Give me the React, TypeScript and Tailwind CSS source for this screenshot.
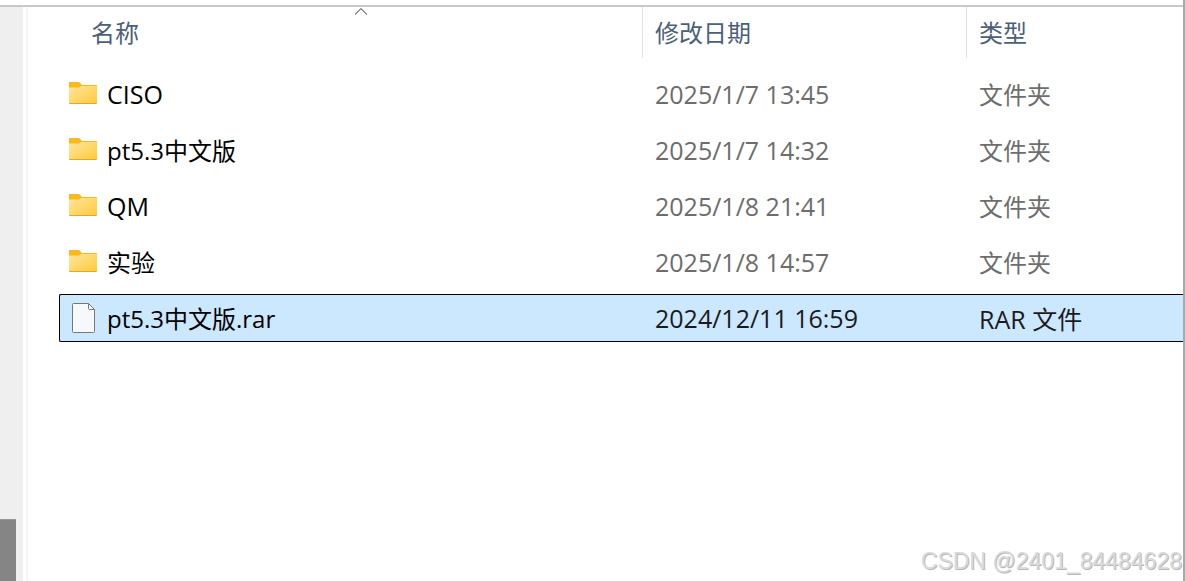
import React from "react";

type Entry = {
  name: string;
  modified: string;
  type: string;
  kind: "folder" | "file";
  selected?: boolean;
};

const entries: Entry[] = [
  { name: "CISO", modified: "2025/1/7 13:45", type: "文件夹", kind: "folder" },
  { name: "pt5.3中文版", modified: "2025/1/7 14:32", type: "文件夹", kind: "folder" },
  { name: "QM", modified: "2025/1/8 21:41", type: "文件夹", kind: "folder" },
  { name: "实验", modified: "2025/1/8 14:57", type: "文件夹", kind: "folder" },
  { name: "pt5.3中文版.rar", modified: "2024/12/11 16:59", type: "RAR 文件", kind: "file", selected: true },
];

function FolderIcon() {
  return (
    <svg width="28" height="22" viewBox="0 0 28 22" aria-hidden="true" className="shrink-0">
      <defs>
        <linearGradient id="folder-front" x1="0" y1="0" x2="1" y2="1">
          <stop offset="0" stopColor="#ffe79d" />
          <stop offset="1" stopColor="#ffc937" />
        </linearGradient>
      </defs>
      <path d="M0 1.2Q0 0 1.2 0H9.2Q10 0 10.6.6L13 3H27Q28 3 28 4V8H0Z" fill="#fbb81c" />
      <path d="M0 5.6H9.4Q10.2 5.6 10.8 5L12 4H27.2Q28 4 28 4.8V21Q28 22 27 22H1Q0 22 0 21Z" fill="url(#folder-front)" />
      <path d="M0 20.6Q0 22 1.2 22H26.8Q28 22 28 20.6Q27.6 21 26.8 21H1.2Q.4 21 0 20.6Z" fill="#eba51c" />
    </svg>
  );
}

function FileIcon() {
  return (
    <svg width="24" height="32" viewBox="0 0 24 32" aria-hidden="true" className="shrink-0">
      <path
        d="M1.5 1.5H16.5L22.5 7.5V29.5Q22.5 30.5 21.5 30.5H1.5Q.5 30.5.5 29.5V2.5Q.5 1.5 1.5 1.5Z"
        fill="#f6f8f9"
        stroke="#777777"
      />
      <path d="M16.5 1.5V6.5Q16.5 7.5 17.5 7.5H22.5" fill="none" stroke="#777777" />
    </svg>
  );
}

function SortCaret() {
  return (
    <svg
      width="13"
      height="7"
      viewBox="0 0 13 7"
      aria-hidden="true"
      className="absolute top-px left-1/2 -translate-x-1/2"
    >
      <path d="M.4 6.6 6.5.6 12.6 6.6" fill="none" stroke="#333333" />
    </svg>
  );
}

function HeaderButton({ label, sorted = false }: { label: string; sorted?: boolean }) {
  return (
    <button type="button" className="relative flex h-[51px] w-full items-center pt-px pl-3 text-2xl leading-8 text-[#4c607a]">
      {sorted && <SortCaret />}
      {label}
    </button>
  );
}

function Row({ entry }: { entry: Entry }) {
  const edge = entry.selected ? "border-black bg-[#cce8ff]" : "border-transparent";
  const detail = entry.selected ? "text-[#1b1b1b]" : "text-[#6d6d6d]";
  const latinName = /^[\x20-\x7e]+$/.test(entry.name);
  const typeSize = entry.kind === "file" ? "text-[25px]" : "text-2xl";
  return (
    <tr aria-selected={entry.selected ?? false}>
      <td className={`h-12 rounded-l-xs border-y border-l p-0 text-black ${edge}`}>
        <div className="flex items-center">
          <span className="flex w-[47px] items-center pl-[9px]">
            {entry.kind === "folder" ? (
              <span className="flex pb-0.5">
                <FolderIcon />
              </span>
            ) : (
              <span className="flex w-[30px] justify-center">
                <FileIcon />
              </span>
            )}
          </span>
          <span className={latinName ? "text-[25px] leading-8" : "pt-0.5 text-2xl leading-8"}>{entry.name}</span>
        </div>
      </td>
      <td className={`border-y p-0 pl-[13px] text-[25px] leading-8 ${edge} ${detail}`}>{entry.modified}</td>
      <td className={`border-y p-0 pt-0.5 pl-[13px] leading-8 ${typeSize} ${edge} ${detail}`}>{entry.type}</td>
    </tr>
  );
}

export default function App() {
  return (
    <div className="flex min-h-screen flex-col border-r-2 border-[#a9a9a9] bg-white pt-[5px] font-['Open_Sans','Noto_Sans_CJK_SC',sans-serif]">
      <div className="h-0.5 bg-[#c8c8c8]" />
      <div className="flex grow">
        <aside className="flex w-[23px] shrink-0 flex-col justify-end bg-[#efefef]">
          <div className="h-[62px] w-4 border-t border-[#969696] bg-[#858585]" />
        </aside>
        <div className="ml-[3px] w-0.5 shrink-0 bg-[#f5f5f5]" />
        <main className="flex min-w-0 grow flex-col justify-between pl-[31px]">
          <table className="-mt-2 w-full table-fixed border-separate border-spacing-x-0 border-spacing-y-2 text-left whitespace-nowrap">
            <colgroup>
              <col className="w-[583px]" />
              <col className="w-[324px]" />
              <col />
            </colgroup>
            <thead>
              <tr>
                <th className="p-0 pb-1 pl-5 font-normal" aria-sort="ascending">
                  <HeaderButton label="名称" sorted />
                </th>
                <th className="p-0 pb-1 font-normal">
                  <div className="border-l border-[#e3e3e3]">
                    <HeaderButton label="修改日期" />
                  </div>
                </th>
                <th className="p-0 pb-1 font-normal">
                  <div className="border-l border-[#e3e3e3]">
                    <HeaderButton label="类型" />
                  </div>
                </th>
              </tr>
            </thead>
            <tbody>
              {entries.map((entry) => (
                <Row key={entry.name} entry={entry} />
              ))}
            </tbody>
          </table>
          <p className="pr-px pb-1 text-right font-['Liberation_Sans',sans-serif] text-[23px] leading-8 text-[#dadada] [text-shadow:1px_1px_0_#b8b8b8]">
            CSDN @2401_84484628
          </p>
        </main>
      </div>
    </div>
  );
}
